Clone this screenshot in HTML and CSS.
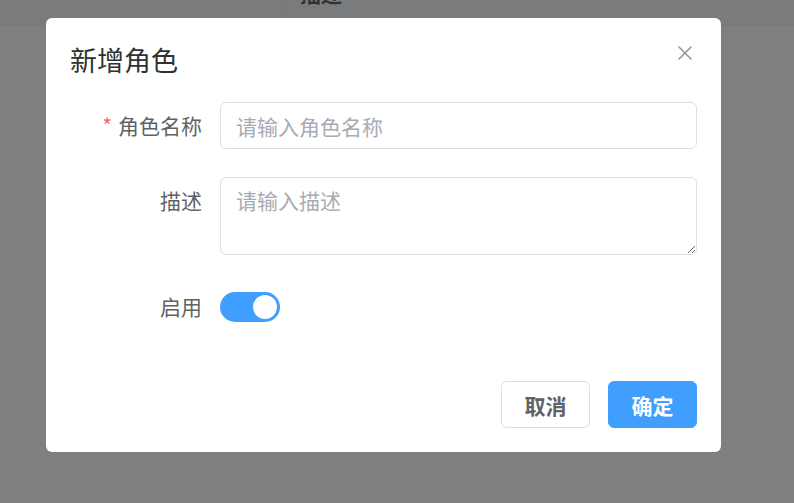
FILE: index.html
```html
<!DOCTYPE html>
<html lang="zh-CN">
<head>
<meta charset="utf-8">
<title>新增角色</title>
<link rel="stylesheet" href="styles.css">
</head>
<body>
<div class="page">
  <div class="table-head">
    <div class="cell cell-first"></div>
    <div class="cell cell-desc"><span class="head-text">描述</span></div>
  </div>
</div>

<div class="overlay">
  <div class="dialog">
    <div class="dialog-header">
      <span class="dialog-title">新增角色</span>
    </div>
    <button class="dialog-close" aria-label="关闭">
      <svg viewBox="0 0 14 14" width="14" height="14"><path d="M1 1 L13 13 M13 1 L1 13" stroke="#909399" stroke-width="1.5" fill="none" stroke-linecap="round"/></svg>
    </button>
    <form class="dialog-body">
      <div class="form-row">
        <label class="form-label required">角色名称</label>
        <div class="form-control">
          <input class="input" type="text" placeholder="请输入角色名称">
        </div>
      </div>
      <div class="form-row">
        <label class="form-label">描述</label>
        <div class="form-control">
          <textarea class="textarea" rows="2" placeholder="请输入描述"></textarea>
        </div>
      </div>
      <div class="form-row">
        <label class="form-label">启用</label>
        <div class="form-control switch-wrap">
          <span class="switch is-on"><span class="switch-knob"></span></span>
        </div>
      </div>
    </form>
    <div class="dialog-footer">
      <button class="btn btn-default" type="button">取消</button>
      <button class="btn btn-primary" type="button">确定</button>
    </div>
  </div>
</div>
</body>
</html>
```

FILE: styles.css
```css
* {
  box-sizing: border-box;
}

html, body {
  margin: 0;
  padding: 0;
  height: 100%;
}

body {
  font-family: "Noto Sans CJK SC", "Noto Sans", sans-serif;
  background: #ffffff;
  overflow: hidden;
}

.page {
  height: 100%;
}

.table-head {
  display: flex;
  height: 26px;
  background: #f5f7fa;
  border-bottom: 1px solid #ebeef5;
  overflow: hidden;
}

.cell {
  height: 100%;
}

.cell-first {
  width: 282px;
  border-right: 1px solid #ebeef5;
}

.cell-desc {
  padding-left: 18px;
}

.head-text {
  display: block;
  margin-top: -17px;
  font-size: 21px;
  line-height: 21px;
  font-weight: 700;
  color: #606266;
}

.overlay {
  position: fixed;
  inset: 0;
  background: rgba(0, 0, 0, 0.5);
  padding-top: 18px;
  padding-left: 46px;
}

.dialog {
  position: relative;
  width: 675px;
  background: #ffffff;
  border-radius: 6px;
}

.dialog-header {
  padding: 24px 24px 0;
}

.dialog-title {
  display: block;
  font-size: 27px;
  line-height: 36px;
  color: #303133;
}

.dialog-close {
  position: absolute;
  top: 28px;
  right: 29px;
  width: 14px;
  height: 14px;
  padding: 0;
  border: 0;
  background: transparent;
  display: flex;
}

.dialog-body {
  margin: 0;
  padding: 24px 24px 0;
}

.form-row {
  display: flex;
  align-items: flex-start;
  margin-bottom: 28px;
}

.form-label {
  flex: 0 0 150px;
  padding-right: 18px;
  text-align: right;
  font-size: 21px;
  line-height: 47px;
  color: #606266;
}

.form-label.required::before {
  content: "*";
  color: #f56c6c;
  margin-right: 6px;
}

.form-control {
  flex: 1;
  min-width: 0;
}

.input {
  display: block;
  width: 100%;
  height: 47px;
  padding: 0 15px;
  border: 1px solid #dcdfe6;
  border-radius: 6px;
  font-family: inherit;
  font-size: 21px;
  line-height: 45px;
  color: #606266;
  outline: none;
  background: #fff;
}

.textarea {
  display: block;
  width: 100%;
  height: 78px;
  padding: 7px 15px;
  border: 1px solid #dcdfe6;
  border-radius: 6px;
  font-family: inherit;
  font-size: 21px;
  line-height: 1.5;
  color: #606266;
  outline: none;
  resize: vertical;
  background: #fff;
}

.input::placeholder,
.textarea::placeholder {
  color: #a8abb2;
}

.switch-wrap {
  display: flex;
  align-items: center;
  height: 47px;
}

.switch {
  display: flex;
  align-items: center;
  justify-content: flex-end;
  width: 60px;
  height: 30px;
  padding: 0 3px;
  border-radius: 15px;
  background: #409eff;
}

.switch-knob {
  width: 24px;
  height: 24px;
  border-radius: 50%;
  background: #ffffff;
}

.dialog-footer {
  display: flex;
  justify-content: flex-end;
  gap: 18px;
  padding: 23px 24px 24px;
}

.btn {
  width: 89px;
  height: 47px;
  padding: 0;
  border-radius: 6px;
  font-family: inherit;
  font-size: 21px;
  font-weight: 700;
  cursor: pointer;
}

.btn-default {
  background: #ffffff;
  border: 1px solid #dcdfe6;
  color: #606266;
}

.btn-primary {
  background: #409eff;
  border: 1px solid #409eff;
  color: #ffffff;
}
```
